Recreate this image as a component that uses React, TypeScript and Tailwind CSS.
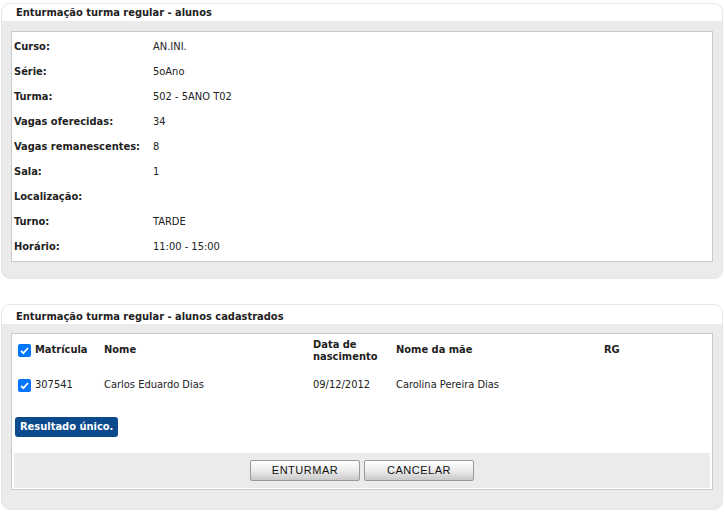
import React from "react";

const font = { fontFamily: '"DejaVu Sans Condensed", "DejaVu Sans", Tahoma, sans-serif' };

function Panel({
  title,
  children,
  bodyClass,
  headClass,
}: {
  title: string;
  children: React.ReactNode;
  bodyClass: string;
  headClass: string;
}) {
  return (
    <div className="mx-[1px] rounded-[9px] border border-[#e6e6e6] bg-[#ebebeb]">
      <div className={headClass}>{title}</div>
      <div className={bodyClass}>{children}</div>
    </div>
  );
}

const rows: [string, string][] = [
  ["Curso:", "AN.INI."],
  ["Série:", "5oAno"],
  ["Turma:", "502 - 5ANO T02"],
  ["Vagas oferecidas:", "34"],
  ["Vagas remanescentes:", "8"],
  ["Sala:", "1"],
  ["Localização:", ""],
  ["Turno:", "TARDE"],
  ["Horário:", "11:00 - 15:00"],
];

function Check() {
  return (
    <span className="inline-flex h-[13px] w-[13px] shrink-0 items-center justify-center rounded-[2px] bg-[#0075ff]">
      <svg width="11" height="11" viewBox="0 0 11 11">
        <path d="M2 5.8 L4.4 8.2 L9 3" fill="none" stroke="white" strokeWidth="1.8" />
      </svg>
    </span>
  );
}

const btn =
  "h-[21px] w-[110px] rounded-[2px] border border-[#9a9a9a] bg-gradient-to-b from-white via-[#ececec] to-[#c9c9c9] text-[11px] tracking-[0.5px] text-[#111]";

export default function App() {
  return (
    <div className="h-[513px] w-[724px] bg-white pt-[3px] text-[#222]" style={font}>
      <Panel
        title="Enturmação turma regular - alunos"
        headClass="flex h-[17px] items-center rounded-t-[8px] bg-white pl-[14px] pt-[1px] text-[11px] font-bold text-[#222]"
        bodyClass="px-[9px] pt-[10px] pb-[16px]"
      >
        <div className="border border-[#c9c9c9] bg-white px-[2px] pt-[3px] pb-[1px]">
          {rows.map(([l, v]) => (
            <div key={l} className="flex h-[25px] items-center text-[11px]">
              <div className="w-[139px] shrink-0 whitespace-nowrap font-bold">{l}</div>
              <div>{v}</div>
            </div>
          ))}
        </div>
      </Panel>

      <div className="h-[25px]" />

      <Panel
        title="Enturmação turma regular - alunos cadastrados"
        headClass="flex h-[19px] items-center rounded-t-[8px] bg-white pl-[14px] pt-[5px] text-[11px] font-bold text-[#222]"
        bodyClass="px-[9px] pt-[9px] pb-[19px]"
      >
        <div className="border border-[#c9c9c9] bg-white px-[2px] pb-[1px]">
          <table className="w-full table-fixed border-collapse text-[11px]">
            <colgroup>
              <col className="w-[90px]" />
              <col className="w-[209px]" />
              <col className="w-[83px]" />
              <col className="w-[208px]" />
              <col />
            </colgroup>
            <thead>
              <tr className="h-[33px] align-middle font-bold">
                <th className="pl-[4px] text-left">
                  <span className="flex items-center gap-[4px]">
                    <Check />
                    Matrícula
                  </span>
                </th>
                <th className="text-left">Nome</th>
                <th className="text-left leading-[12px]">
                  Data de
                  <br />
                  nascimento
                </th>
                <th className="text-left">Nome da mãe</th>
                <th className="text-left">RG</th>
              </tr>
            </thead>
            <tbody>
              <tr className="h-[36px]">
                <td className="pl-[4px]">
                  <span className="flex items-center gap-[4px]">
                    <Check />
                    307541
                  </span>
                </td>
                <td>Carlos Eduardo Dias</td>
                <td>09/12/2012</td>
                <td>Carolina Pereira Dias</td>
                <td />
              </tr>
            </tbody>
          </table>
          <div className="flex pt-[14px] pb-[16px] pl-[1px]">
            <span className="flex h-[20px] items-center rounded-[3px] bg-[#0b4a8d] px-[5px] text-[11px] font-bold text-white">
              Resultado único.
            </span>
          </div>
          <div className="flex h-[35px] items-center justify-center gap-[4px] bg-[#ebebeb]">
            <button className={btn} style={{ fontFamily: '"Liberation Sans", Arial, sans-serif' }}>ENTURMAR</button>
            <button className={btn} style={{ fontFamily: '"Liberation Sans", Arial, sans-serif' }}>CANCELAR</button>
          </div>
        </div>
      </Panel>
    </div>
  );
}
